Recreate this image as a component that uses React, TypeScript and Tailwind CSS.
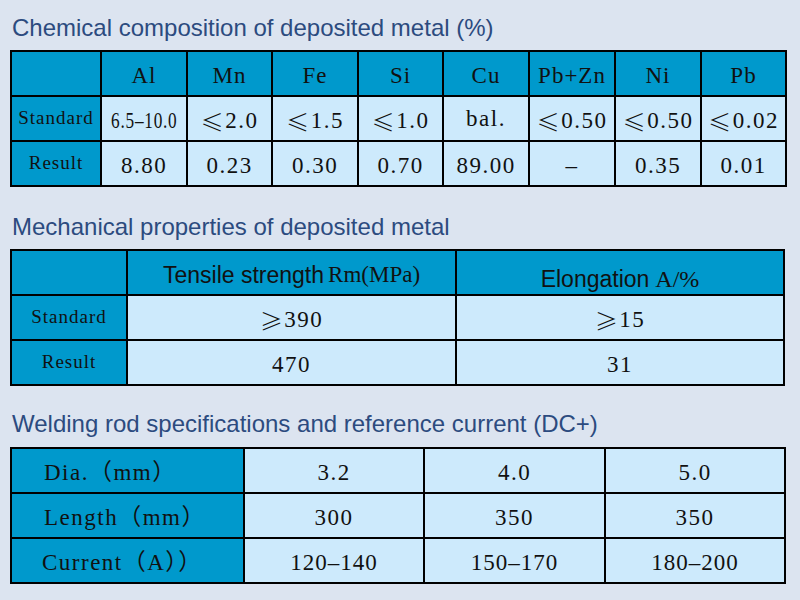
import React from "react";

const SERIF = "font-['Liberation_Serif','Noto_Sans_CJK_SC',serif]";
const SANS = "font-['Liberation_Sans',Arial,sans-serif]";

function Le({ g = false }: { g?: boolean }) {
  return (
    <span className="font-['Noto_Sans_CJK_SC',sans-serif] font-light">{g ? "≥" : "≤"}</span>
  );
}

function Head({ children, className = "" }: { children?: React.ReactNode; className?: string }) {
  return (
    <div className={`flex items-center justify-center whitespace-nowrap bg-[#0099cc] pt-[6px] text-[#111] ${SERIF} text-[23px] tracking-[1px] ${className}`}>
      {children}
    </div>
  );
}

function Label({ children, className = "" }: { children?: React.ReactNode; className?: string }) {
  return (
    <div className={`flex items-center whitespace-nowrap bg-[#0099cc] text-[#111] ${SERIF} ${className}`}>{children}</div>
  );
}

function Cell({ children, className = "" }: { children?: React.ReactNode; className?: string }) {
  return (
    <div className={`flex items-center justify-center whitespace-nowrap bg-[#cdeafc] pt-[6px] text-[#111] ${SERIF} text-[23px] tracking-[1.5px] ${className}`}>
      {children}
    </div>
  );
}

function Title({ children, className = "" }: { children: React.ReactNode; className?: string }) {
  return (
    <h2 className={`${SANS} text-[24px] leading-[26px] text-[#2c4b7f] pl-[2px] whitespace-nowrap ${className}`}>{children}</h2>
  );
}

export default function App() {
  const heads = ["Al", "Mn", "Fe", "Si", "Cu", "Pb+Zn", "Ni", "Pb"];
  return (
    <div className="w-[800px] h-[600px] bg-[#dce4f0] px-[10px] pt-[15px] overflow-hidden">
      <Title>Chemical composition of deposited metal (%)</Title>
      <div className="mt-[9px] grid w-[777px] grid-cols-[88px_84px_83px_84px_83px_84px_84px_84px_83px] grid-rows-[43px_43px_43px] gap-[2px] bg-black p-[2px]">
        <Head />
        {heads.map((h) => (
          <Head key={h}>{h}</Head>
        ))}
        <Label className="justify-center text-[19px] tracking-[1px]">Standard</Label>
        <Cell className="tracking-normal">
          <span className="inline-block scale-x-75 tracking-[1px]">6.5–10.0</span>
        </Cell>
        <Cell>
          <Le />2.0
        </Cell>
        <Cell>
          <Le />1.5
        </Cell>
        <Cell>
          <Le />1.0
        </Cell>
        <Cell className="text-[16px] pt-[0px] pb-[4px]">bal.</Cell>
        <Cell>
          <Le />0.50
        </Cell>
        <Cell>
          <Le />0.50
        </Cell>
        <Cell>
          <Le />0.02
        </Cell>
        <Label className="justify-center text-[19px] tracking-[1px]">Result</Label>
        <Cell>8.80</Cell>
        <Cell>0.23</Cell>
        <Cell>0.30</Cell>
        <Cell>0.70</Cell>
        <Cell>89.00</Cell>
        <Cell>–</Cell>
        <Cell>0.35</Cell>
        <Cell>0.01</Cell>
      </div>

      <Title className="mt-[27px]">Mechanical properties of deposited metal</Title>
      <div className="mt-[9px] grid w-[775px] grid-cols-[114px_327px_326px] grid-rows-[43px_43px_43px] gap-[2px] bg-black p-[2px]">
        <Head />
        <Head className="tracking-normal pt-[4px]">
          <span className={`${SANS} text-[23px] tracking-normal`}>Tensile strength</span>
          <span className="ml-[4px]">Rm(MPa)</span>
        </Head>
        <Head className="tracking-normal pt-[13px]">
          <span className={`${SANS} text-[23px] tracking-normal`}>Elongation</span>
          <span className="ml-[6px] text-[24px]">A/%</span>
        </Head>
        <Label className="justify-center text-[19px] tracking-[1px]">Standard</Label>
        <Cell>
          <Le g />390
        </Cell>
        <Cell>
          <Le g />15
        </Cell>
        <Label className="justify-center text-[19px] tracking-[1px]">Result</Label>
        <Cell>470</Cell>
        <Cell>31</Cell>
      </div>

      <Title className="mt-[25px]">Welding rod specifications and reference current (DC+)</Title>
      <div className="mt-[10px] grid w-[776px] grid-cols-[231px_178px_179px_178px] grid-rows-[43px_43px_43px] gap-[2px] bg-black p-[2px]">
        <Label className="pl-[32px] pt-[6px] text-[23px] tracking-[1.5px]">Dia.（mm）</Label>
        <Cell>3.2</Cell>
        <Cell>4.0</Cell>
        <Cell>5.0</Cell>
        <Label className="pl-[32px] pt-[6px] text-[23px] tracking-[1.5px]">Length（mm）</Label>
        <Cell>300</Cell>
        <Cell>350</Cell>
        <Cell>350</Cell>
        <Label className="pl-[30px] pt-[6px] text-[23px] tracking-[1.5px]">Current（A））</Label>
        <Cell className="tracking-[1px]">120–140</Cell>
        <Cell className="tracking-[1px]">150–170</Cell>
        <Cell className="tracking-[1px]">180–200</Cell>
      </div>
    </div>
  );
}
